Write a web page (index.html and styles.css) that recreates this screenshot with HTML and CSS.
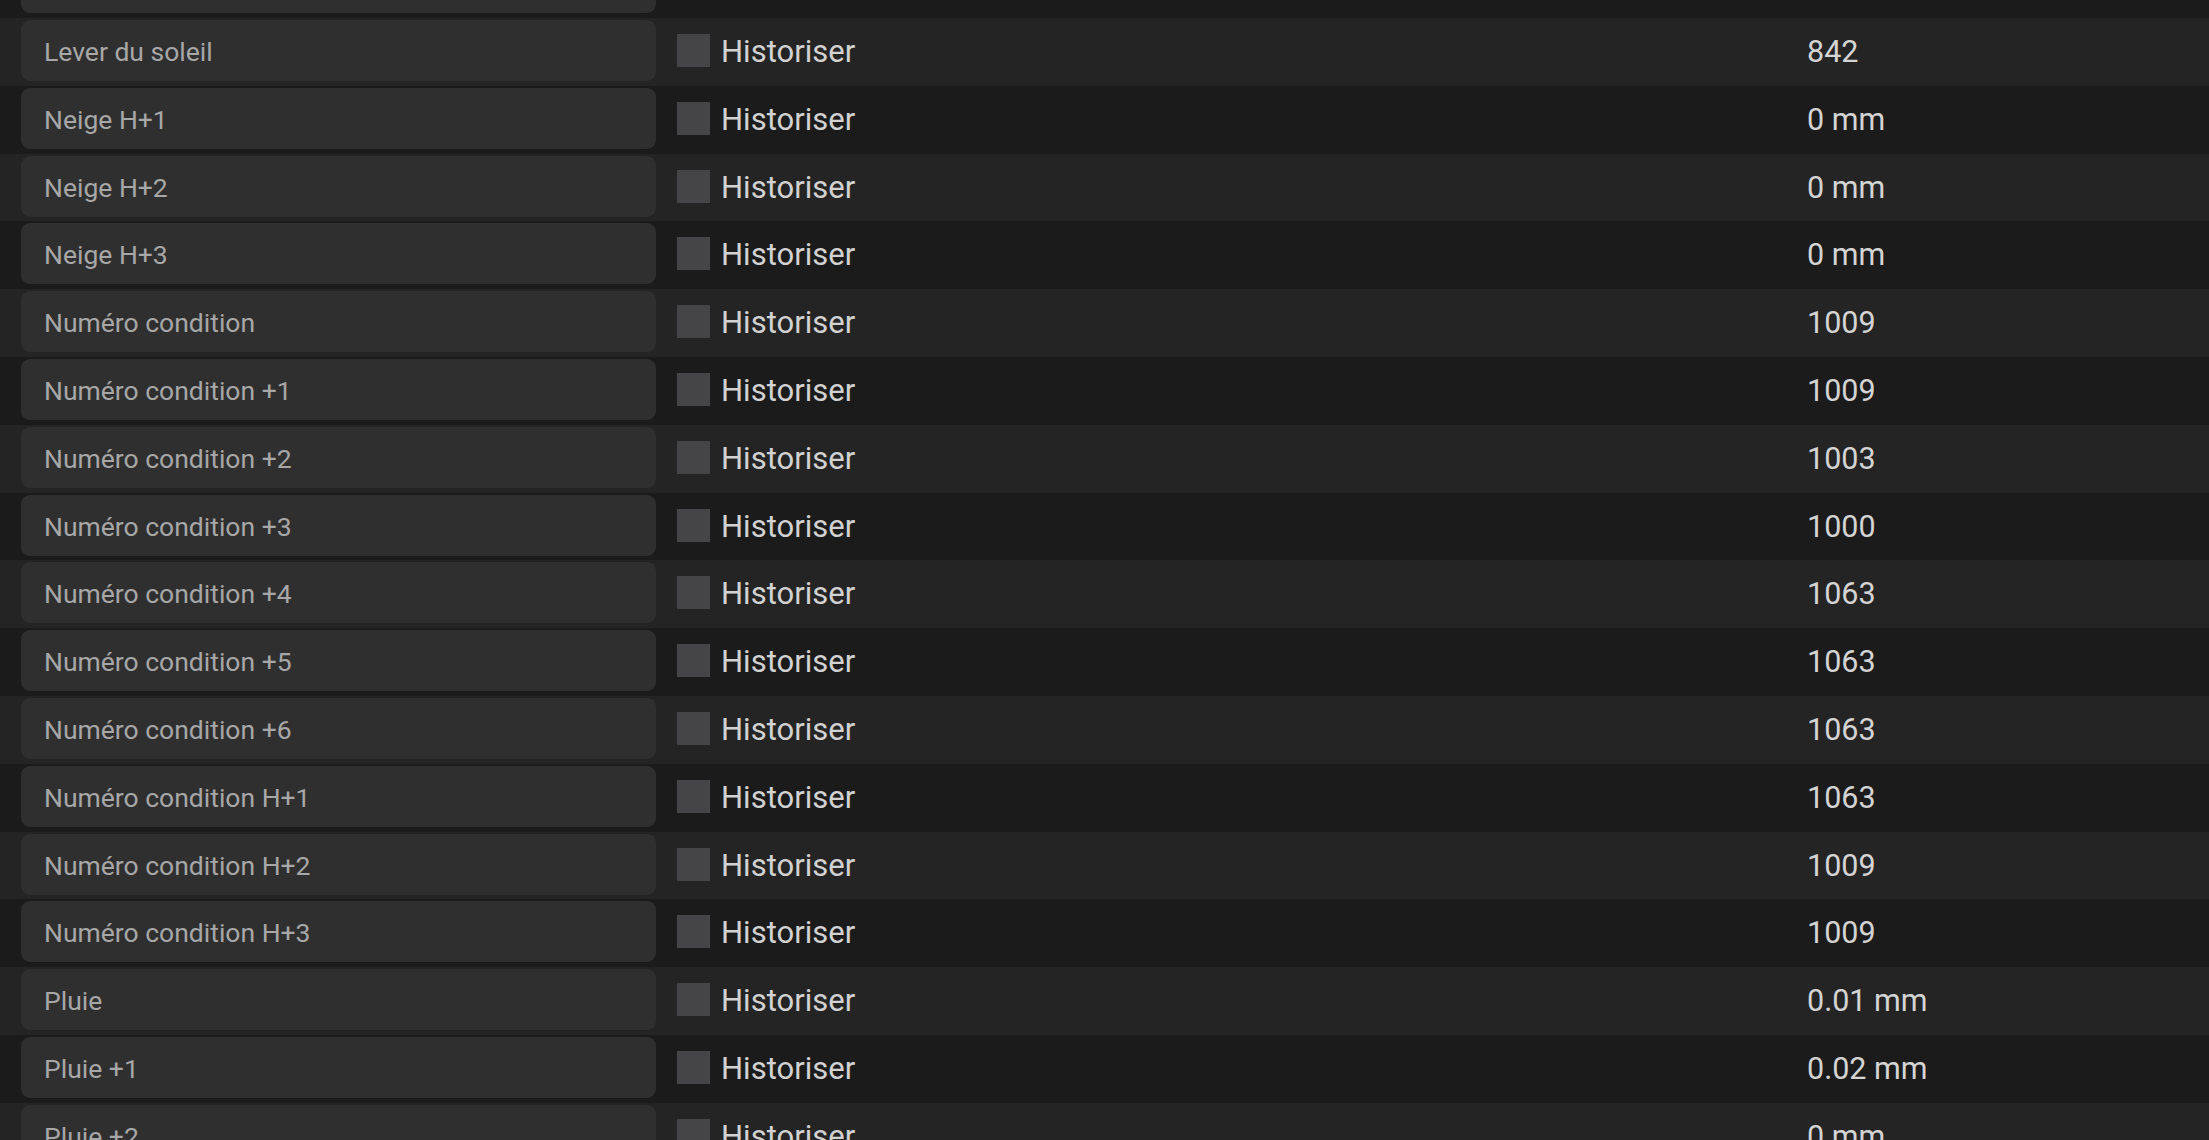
FILE: index.html
```html
<!DOCTYPE html>
<html lang="fr">
<head>
<meta charset="utf-8">
<title>Attributs</title>
<link rel="stylesheet" href="styles.css">
</head>
<body>
<div class="list">
  <div class="row"><div class="label"></div><div class="hist"><span class="box"></span></div><div class="value"></div></div>
  <div class="row"><div class="label">Lever du soleil</div><div class="hist"><span class="box"></span><span class="hist-text">Historiser</span></div><div class="value">842</div></div>
  <div class="row"><div class="label">Neige H+1</div><div class="hist"><span class="box"></span><span class="hist-text">Historiser</span></div><div class="value">0 mm</div></div>
  <div class="row"><div class="label">Neige H+2</div><div class="hist"><span class="box"></span><span class="hist-text">Historiser</span></div><div class="value">0 mm</div></div>
  <div class="row"><div class="label">Neige H+3</div><div class="hist"><span class="box"></span><span class="hist-text">Historiser</span></div><div class="value">0 mm</div></div>
  <div class="row"><div class="label">Numéro condition</div><div class="hist"><span class="box"></span><span class="hist-text">Historiser</span></div><div class="value">1009</div></div>
  <div class="row"><div class="label">Numéro condition +1</div><div class="hist"><span class="box"></span><span class="hist-text">Historiser</span></div><div class="value">1009</div></div>
  <div class="row"><div class="label">Numéro condition +2</div><div class="hist"><span class="box"></span><span class="hist-text">Historiser</span></div><div class="value">1003</div></div>
  <div class="row"><div class="label">Numéro condition +3</div><div class="hist"><span class="box"></span><span class="hist-text">Historiser</span></div><div class="value">1000</div></div>
  <div class="row"><div class="label">Numéro condition +4</div><div class="hist"><span class="box"></span><span class="hist-text">Historiser</span></div><div class="value">1063</div></div>
  <div class="row"><div class="label">Numéro condition +5</div><div class="hist"><span class="box"></span><span class="hist-text">Historiser</span></div><div class="value">1063</div></div>
  <div class="row"><div class="label">Numéro condition +6</div><div class="hist"><span class="box"></span><span class="hist-text">Historiser</span></div><div class="value">1063</div></div>
  <div class="row"><div class="label">Numéro condition H+1</div><div class="hist"><span class="box"></span><span class="hist-text">Historiser</span></div><div class="value">1063</div></div>
  <div class="row"><div class="label">Numéro condition H+2</div><div class="hist"><span class="box"></span><span class="hist-text">Historiser</span></div><div class="value">1009</div></div>
  <div class="row"><div class="label">Numéro condition H+3</div><div class="hist"><span class="box"></span><span class="hist-text">Historiser</span></div><div class="value">1009</div></div>
  <div class="row"><div class="label">Pluie</div><div class="hist"><span class="box"></span><span class="hist-text">Historiser</span></div><div class="value">0.01 mm</div></div>
  <div class="row"><div class="label">Pluie +1</div><div class="hist"><span class="box"></span><span class="hist-text">Historiser</span></div><div class="value">0.02 mm</div></div>
  <div class="row"><div class="label">Pluie +2</div><div class="hist"><span class="box"></span><span class="hist-text">Historiser</span></div><div class="value">0 mm</div></div>
</div>
</body>
</html>
```

FILE: styles.css
```css
html, body {
  margin: 0;
  padding: 0;
  background: #1b1b1b;
  overflow: hidden;
  height: 1140px;
}

body {
  font-family: Roboto, "Liberation Sans", sans-serif;
}

.list {
  margin-top: -49.8px;
  display: flex;
  flex-direction: column;
}

.row {
  height: 67.8px;
  box-sizing: border-box;
  padding-top: 2px;
  display: flex;
  align-items: flex-start;
  background: #1b1b1b;
}

.row:nth-child(even) {
  background: #242424;
}

.label {
  margin-left: 21px;
  width: 635px;
  height: 61px;
  box-sizing: border-box;
  padding: 2px 0 0 23px;
  background: #2f2f2f;
  border-radius: 9px;
  display: flex;
  align-items: center;
  color: #a7a7a7;
  font-size: 26.5px;
  flex: none;
}

.hist {
  margin-left: 21px;
  width: 1130px;
  height: 61px;
  display: flex;
  align-items: center;
  gap: 11px;
  flex: none;
}

.box {
  width: 33px;
  height: 33px;
  background: #454548;
  flex: none;
}

.hist-text {
  color: #d2d2d2;
  font-size: 31px;
  padding-top: 2px;
}

.value {
  height: 61px;
  box-sizing: border-box;
  padding-top: 2px;
  display: flex;
  align-items: center;
  color: #d4d4d4;
  font-size: 30.5px;
}
```
